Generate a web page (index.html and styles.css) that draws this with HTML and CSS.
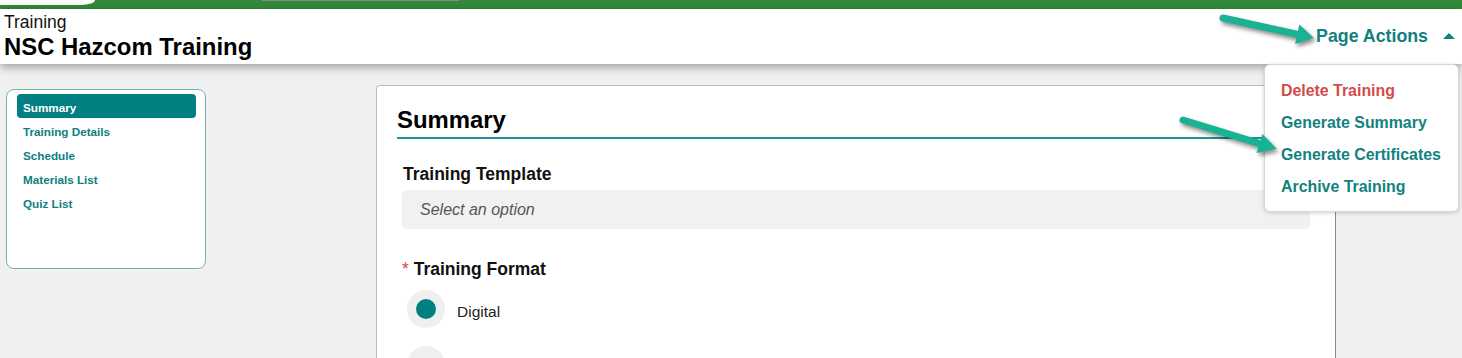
FILE: index.html
```html
<!DOCTYPE html>
<html lang="en">
<head>
<meta charset="utf-8">
<title>NSC Hazcom Training</title>
<link rel="stylesheet" href="styles.css">
</head>
<body>
<div class="topbar">
  <div class="topbar-tab"></div>
  <div class="topbar-line"></div>
</div>
<header class="page-header">
  <div class="titles">
    <div class="crumb">Training</div>
    <h1 class="title">NSC Hazcom Training</h1>
  </div>
  <div class="actions">
    <span class="actions-label">Page Actions</span>
    <span class="caret"></span>
  </div>
</header>

<ul class="dropdown">
  <li class="dd-item danger">Delete Training</li>
  <li class="dd-item">Generate Summary</li>
  <li class="dd-item">Generate Certificates</li>
  <li class="dd-item">Archive Training</li>
</ul>

<div class="content">
  <nav class="sidenav">
    <div class="nav-item active">Summary</div>
    <div class="nav-item">Training Details</div>
    <div class="nav-item">Schedule</div>
    <div class="nav-item">Materials List</div>
    <div class="nav-item">Quiz List</div>
  </nav>
  <main class="card">
    <h2 class="card-title">Summary</h2>
    <div class="form">
      <label class="field-label">Training Template</label>
      <div class="select"><span class="placeholder">Select an option</span></div>
      <label class="field-label format-label"><span class="req">*</span> Training Format</label>
      <div class="radios">
        <div class="radio-row">
          <span class="radio checked"><span class="dot"></span></span>
          <span class="radio-text">Digital</span>
        </div>
        <div class="radio-row">
          <span class="radio"></span>
          <span class="radio-text"></span>
        </div>
      </div>
    </div>
  </main>
</div>

<svg class="annotations" width="1462" height="358" viewBox="0 0 1462 358">
  <g transform="translate(1223 18) rotate(12.4)">
    <line x1="0" y1="0" x2="78" y2="0" stroke="#19b294" stroke-width="7" stroke-linecap="round"/>
    <polygon points="76,-10 93,0 76,10" fill="#19b294"/>
  </g>
  <g transform="translate(1183 120) rotate(17.1)">
    <line x1="0" y1="0" x2="82" y2="0" stroke="#19b294" stroke-width="7" stroke-linecap="round"/>
    <polygon points="80,-10 98,0 80,10" fill="#19b294"/>
  </g>
</svg>
</body>
</html>
```

FILE: styles.css
```css
* { box-sizing: border-box; }

html, body {
  margin: 0;
  padding: 0;
}

body {
  background: #f0f0f0;
  font-family: "Liberation Sans", Arial, sans-serif;
  color: #111;
  width: 1462px;
  height: 358px;
  overflow: hidden;
  position: relative;
}

.topbar {
  height: 9px;
  background: #328a3a;
  display: flex;
  align-items: flex-start;
}

.topbar-tab {
  width: 95px;
  height: 5px;
  background: #fff;
  border-bottom-right-radius: 14px 5px;
}

.topbar-line {
  margin-left: 167px;
  width: 197px;
  height: 1px;
  background: #8a8a8a;
}

.page-header {
  height: 55px;
  background: #fff;
  display: flex;
  justify-content: space-between;
  align-items: flex-start;
  padding: 3px 7px 0 4px;
  box-shadow: 0 3px 9px rgba(0, 0, 0, 0.35);
  position: relative;
  z-index: 1;
}

.crumb {
  font-size: 17.5px;
  line-height: 20px;
  color: #111;
}

.title {
  margin: 2px 0 0;
  font-size: 23.9px;
  line-height: 26px;
  font-weight: bold;
  color: #000;
}

.actions {
  display: flex;
  align-items: center;
  gap: 15px;
  padding-top: 14px;
}

.actions-label {
  font-size: 17.8px;
  line-height: 20px;
  font-weight: bold;
  color: #12807e;
}

.caret {
  width: 0;
  height: 0;
  border-left: 6px solid transparent;
  border-right: 6px solid transparent;
  border-bottom: 6px solid #12807e;
  margin-top: -1px;
}

.dropdown {
  position: absolute;
  top: 64px;
  left: 1264px;
  width: 195px;
  height: 148px;
  margin: 0;
  padding: 10px 0 8px 16px;
  list-style: none;
  background: #fff;
  border: 1px solid #d6d6d6;
  border-radius: 6px;
  box-shadow: 0 1px 4px rgba(0, 0, 0, 0.18);
  z-index: 5;
}

.dd-item {
  font-size: 15.9px;
  line-height: 32px;
  font-weight: bold;
  color: #128280;
  white-space: nowrap;
}

.dd-item.danger {
  color: #d24b4b;
}

.content {
  display: flex;
  align-items: flex-start;
  gap: 170px;
  padding: 21px 0 0 6px;
}

.sidenav {
  width: 200px;
  height: 180px;
  margin-top: 4px;
  background: #fff;
  border: 1px solid #6fb3b1;
  border-radius: 8px;
  padding: 4px 9px 4px 10px;
  flex-shrink: 0;
}

.nav-item {
  font-size: 11.7px;
  line-height: 20px;
  height: 24px;
  padding-top: 3.5px;
  font-weight: bold;
  color: #0c7f7f;
  padding-left: 6px;
  border-radius: 4px;
}

.nav-item.active {
  background: #008080;
  color: #fff;
}

.card {
  width: 960px;
  height: 273px;
  flex-shrink: 0;
  background: #fff;
  border: 1px solid #bdbdbd;
  border-right-color: #8a8a8a;
  border-bottom: none;
  border-radius: 4px 4px 0 0;
  padding-top: 20px;
  overflow: hidden;
}

.card-title {
  margin: 0 20px;
  font-size: 23.9px;
  line-height: 27px;
  font-weight: bold;
  color: #000;
  padding-bottom: 4px;
  border-bottom: 2px solid #1a9696;
}

.form {
  padding: 0 25px;
}

.field-label {
  display: block;
  margin: 25px 0 0 1px;
  font-size: 17.5px;
  line-height: 20px;
  font-weight: bold;
  color: #111;
}

.format-label {
  margin: 30px 0 0 0;
}

.req {
  color: #d24b4b;
  font-weight: normal;
}

.select {
  margin-top: 6px;
  height: 39px;
  background: #f1f1f1;
  border-radius: 5px;
  display: flex;
  align-items: center;
  padding-left: 18px;
}

.placeholder {
  font-size: 16px;
  font-style: italic;
  color: #555;
}

.radios {
  margin-top: 11px;
  padding-left: 5px;
  display: flex;
  flex-direction: column;
  gap: 18px;
}

.radio-row {
  display: flex;
  align-items: center;
  gap: 12px;
}

.radio {
  width: 38px;
  height: 38px;
  border-radius: 50%;
  background: #efefef;
  display: flex;
  align-items: center;
  justify-content: center;
  flex-shrink: 0;
}

.dot {
  width: 20px;
  height: 20px;
  border-radius: 50%;
  background: #008080;
}

.radio-text {
  font-size: 15.5px;
  color: #222;
  padding-top: 5px;
}

.annotations {
  position: absolute;
  top: 0;
  left: 0;
  pointer-events: none;
  z-index: 10;
  filter: drop-shadow(2px 3px 2px rgba(0, 0, 0, 0.45));
}
```
